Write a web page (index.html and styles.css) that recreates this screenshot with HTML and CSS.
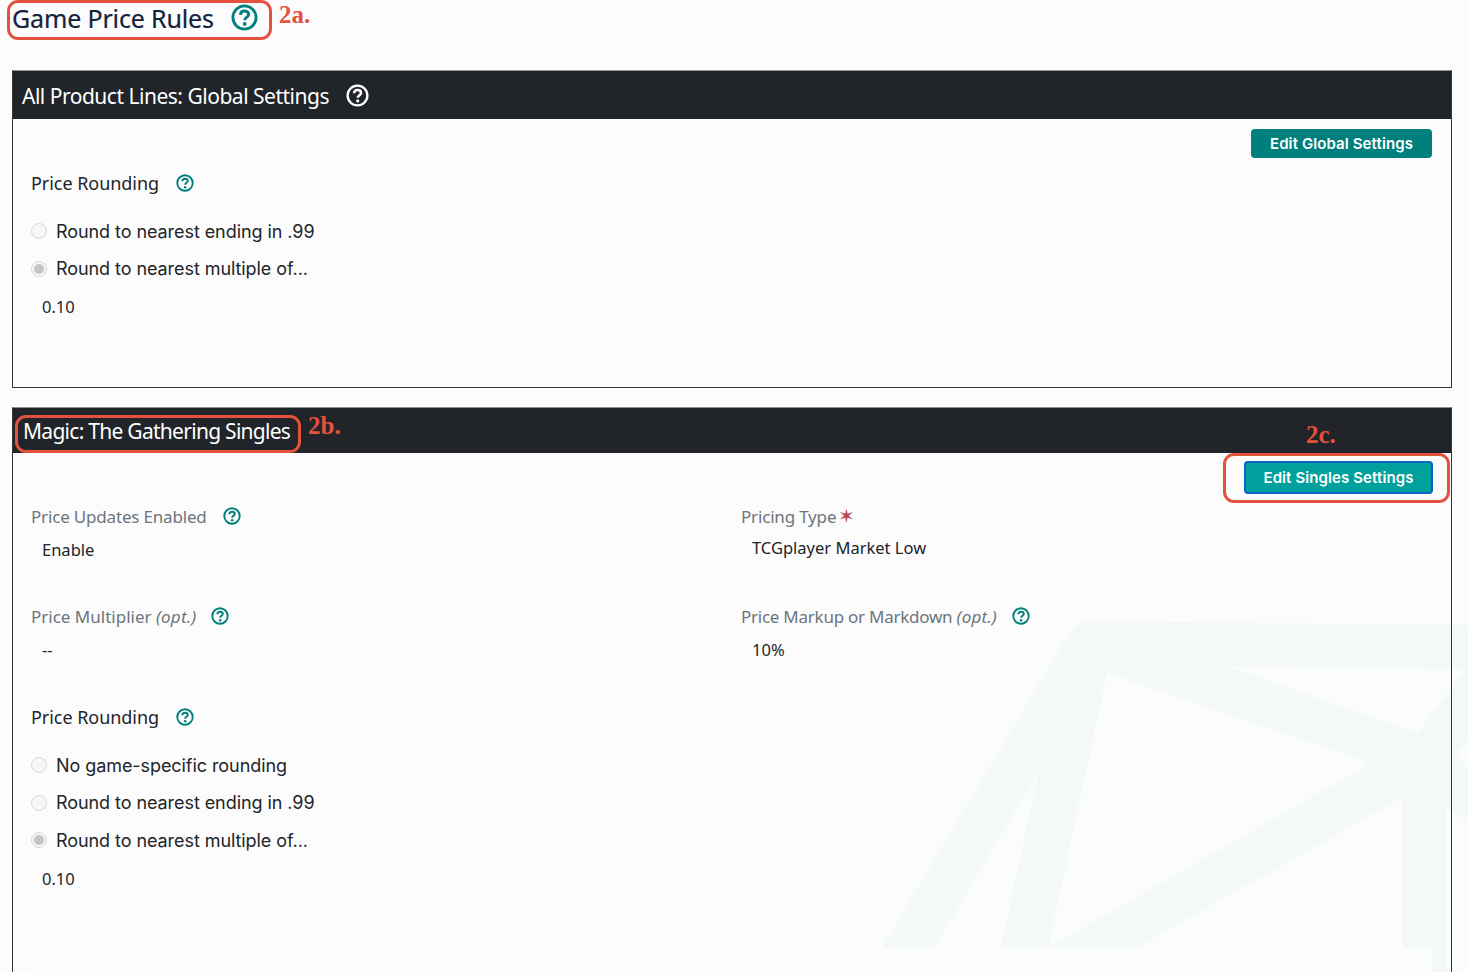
FILE: index.html
```html
<!DOCTYPE html>
<html lang="en">
<head>
<meta charset="utf-8">
<title>Game Price Rules</title>
<link rel="stylesheet" href="styles.css">
</head>
<body>
<svg class="watermark" width="1468" height="972" viewBox="0 0 1468 972" aria-hidden="true">
  <path class="wm-fill" d="M882 948 L1071 630 Q1077 621 1089 621 L1468 625 L1468 823 L1452 810 L1447 806 L1447 972 L1432 972 L1432 948 Z"/>
  <path class="wm-cut" d="M1107 673 L1371 763 L1048 948 Z"/>
  <path class="wm-cut" d="M1228 667 L1465 669 L1418 733 Z"/>
  <path class="wm-cut" d="M1038 773 L1001 948 L934 948 Z"/>
  <path class="wm-cut" d="M1403 797 L1403 948 L1136 948 Z"/>
  <path class="wm-cut" d="M1468 741 L1457 755 L1468 767 Z"/>
</svg>

<header class="page-title">
  <h1>Game Price Rules</h1>
  <svg class="help help-lg" viewBox="0 0 24 24"><use href="#q"/></svg>
</header>

<section class="panel panel-global">
  <div class="panel-head">
    <h2>All Product Lines: Global Settings</h2>
    <svg class="help help-white" viewBox="0 0 24 24"><use href="#q"/></svg>
  </div>
  <div class="panel-body">
    <div class="actions"><button class="btn">Edit Global Settings</button></div>
    <div class="rounding rounding-global">
      <div class="label label-dark">Price Rounding <svg class="help" viewBox="0 0 24 24"><use href="#q"/></svg></div>
      <div class="radio"><span class="dot"></span>Round to nearest ending in .99</div>
      <div class="radio"><span class="dot on"></span>Round to nearest multiple of...</div>
      <div class="value value-multiple">0.10</div>
    </div>
  </div>
</section>

<section class="panel panel-game">
  <div class="panel-head panel-head-game">
    <h2>Magic: The Gathering Singles</h2>
  </div>
  <div class="panel-body">
    <div class="actions actions-focus"><button class="btn btn-focus">Edit Singles Settings</button></div>
    <div class="fields">
      <div class="field">
        <div class="label">Price Updates Enabled <svg class="help" viewBox="0 0 24 24"><use href="#q"/></svg></div>
        <div class="value">Enable</div>
      </div>
      <div class="field">
        <div class="label">Pricing Type<span class="req">✶</span></div>
        <div class="value value-tight">TCGplayer Market Low</div>
      </div>
      <div class="field">
        <div class="label label-multiplier">Price Multiplier <em>(opt.)</em> <svg class="help" viewBox="0 0 24 24"><use href="#q"/></svg></div>
        <div class="value">--</div>
      </div>
      <div class="field">
        <div class="label label-markup">Price Markup or Markdown <em>(opt.)</em> <svg class="help" viewBox="0 0 24 24"><use href="#q"/></svg></div>
        <div class="value">10%</div>
      </div>
    </div>
    <div class="rounding">
      <div class="label label-dark">Price Rounding <svg class="help" viewBox="0 0 24 24"><use href="#q"/></svg></div>
      <div class="radio"><span class="dot"></span>No game-specific rounding</div>
      <div class="radio"><span class="dot"></span>Round to nearest ending in .99</div>
      <div class="radio"><span class="dot on"></span>Round to nearest multiple of...</div>
      <div class="value value-multiple">0.10</div>
    </div>
    <div class="next-box"></div>
  </div>
</section>

<div class="mark mark-title"></div><span class="note note-a">2a.</span>
<div class="mark mark-game"></div><span class="note note-b">2b.</span>
<div class="mark mark-btn"></div><span class="note note-c">2c.</span>

<svg class="defs" width="0" height="0" aria-hidden="true">
  <symbol id="q" viewBox="0 0 24 24">
    <circle cx="12" cy="12" r="10.3" fill="none" stroke="currentColor" stroke-width="2.5"/>
    <path d="M8.4 9.7 C8.5 7.4 10.2 6.2 12.1 6.2 C14.2 6.2 15.7 7.5 15.7 9.3 C15.7 11.6 12.2 11.8 12.2 14.4" fill="none" stroke="currentColor" stroke-width="2.6"/>
    <circle cx="12.2" cy="17.7" r="1.7" fill="currentColor"/>
  </symbol>
</svg>
</body>
</html>
```
FILE: styles.css
```css
* { box-sizing: border-box; }
html, body { margin: 0; padding: 0; }
body {
  position: relative;
  width: 1468px;
  height: 972px;
  overflow: hidden;
  background: #fcfcfc;
  color: #212529;
  font-family: "Noto Sans", "Open Sans", sans-serif;
}
.watermark { position: absolute; left: 0; top: 0; }
.wm-fill { fill: #f3f9f9; }
.wm-cut { fill: #fcfcfc; }
.defs { position: absolute; }

.page-title {
  position: relative;
  display: flex;
  align-items: center;
  height: 35px;
  padding-left: 12px;
  margin-bottom: 35px;
}
.page-title h1 {
  margin: 0;
  font-size: 25px;
  font-weight: 400;
  color: #14233c;
  letter-spacing: -0.15px;
  -webkit-text-stroke: 0.2px #14233c;
}
.help { width: 18px; height: 18px; color: #00807d; flex: none; vertical-align: -3px; margin-left: 13px; }
.help-lg { width: 27px; height: 27px; margin-left: 17px; }
.help-white { width: 23px; height: 23px; color: #fff; margin-left: 17px; }

.panel {
  position: relative;
  margin: 0 16px 19px 12px;
  border: 1px solid #33373c;
  border-top-color: #8f9296;
}
.panel-game { height: 640px; }
.panel-head {
  display: flex;
  align-items: center;
  height: 48px;
  padding-left: 9px;
  background: #212529;
  color: #fff;
}
.panel-head-game { height: 45px; padding-left: 10px; }
.panel-head h2 { margin: 0; padding-top: 1px; font-size: 21px; font-weight: 400; letter-spacing: -0.49px; }
.panel-head-game h2 { letter-spacing: -0.72px; }

.panel-body { padding: 8px 19px 0 18px; }
.panel-global .panel-body { height: 268px; padding-top: 10px; }
.actions { display: flex; justify-content: flex-end; }
.btn {
  height: 29px;
  width: 181px;
  border: 0;
  border-radius: 4px;
  background: #00807d;
  color: #fff;
  font-family: Inter, sans-serif;
  font-size: 15px;
  font-weight: 600;
  letter-spacing: 0.1px;
}
.btn-focus {
  height: 33px;
  width: 189px;
  background: #00a09d;
  border: 2px solid #0a63c9;
}
.actions-focus { margin-right: -1px; }

.label {
  display: flex;
  align-items: center;
  height: 24px;
  font-size: 17px;
  color: #6c757d;
  letter-spacing: -0.18px;
  white-space: pre;
}
.label em { font-style: italic; letter-spacing: 0.2px; margin-right: 3px; }
.label-dark { color: #212529; font-size: 18px; letter-spacing: -0.05px; }
.label-multiplier { letter-spacing: 0; }
.label-markup { letter-spacing: -0.25px; }
.label .help { margin-left: 12px; }
.req { color: #bb4a50; font-size: 20px; line-height: 20px; margin-left: 2px; }

.value { font-size: 16.5px; padding-left: 11px; margin-top: 10px; line-height: 24px; color: #212529; }
.value-tight { margin-top: 8px; }
.value-multiple { margin-top: 15px; }

.radio {
  display: flex;
  align-items: center;
  height: 24px;
  margin-top: 13.5px;
  font-family: Inter, sans-serif;
  font-size: 18px;
  letter-spacing: -0.07px;
  color: #212529;
}
.label-dark + .radio { margin-top: 24px; }
.dot {
  position: relative;
  flex: none;
  width: 16px;
  height: 16px;
  margin-right: 9px;
  border: 1px solid #d8d8d8;
  border-radius: 50%;
  background: #f7f7f7;
}
.dot.on::after {
  content: "";
  position: absolute;
  inset: 2px;
  border-radius: 50%;
  background: #c4c4c4;
}

.fields {
  display: grid;
  grid-template-columns: 710px 1fr;
  row-gap: 42px;
  margin-top: 10px;
}
.rounding { margin-top: 43px; }
.rounding-global { margin-top: 13px; }
.rounding-global .value-multiple { margin-top: 14px; }
.next-box { height: 30px; margin-top: 58px; background: #fdfdfd; }

.mark { position: absolute; border: 3.5px solid #e4513c; border-radius: 11px; }
.mark-title { left: 7px; top: 0; width: 265px; height: 40px; }
.mark-game { left: 15px; top: 415px; width: 286px; height: 38px; }
.mark-btn { left: 1223px; top: 453px; width: 227px; height: 50px; }
.note {
  position: absolute;
  font-family: "Liberation Serif", serif;
  font-weight: 700;
  font-size: 25px;
  line-height: 28px;
  color: #e4513c;
}
.note-a { left: 279px; top: 1px; }
.note-b { left: 308px; top: 412px; }
.note-c { left: 1306px; top: 421px; }
```
